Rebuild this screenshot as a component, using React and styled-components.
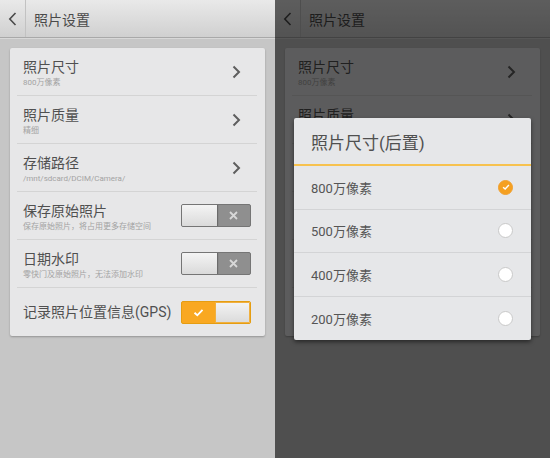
import React from "react";
import styled, { createGlobalStyle } from "styled-components";

const GlobalStyle = createGlobalStyle`
  html, body {
    margin: 0;
    padding: 0;
    background: #4f4f4f;
  }
  body {
    font-family: "Roboto", "Noto Sans CJK SC", sans-serif;
  }
`;

const Screens = styled.div`
  display: flex;
  width: 550px;
  height: 458px;
  overflow: hidden;
`;

const Phone = styled.div`
  position: relative;
  width: 275px;
  height: 458px;
  background: #c6c6c6;
  display: flex;
  flex-direction: column;
`;

const TopBar = styled.div`
  height: 37px;
  display: flex;
  align-items: center;
  background: linear-gradient(#e9e9e9, #d0d0d0);
  border-bottom: 1px solid #a9a9a9;
  box-shadow: 0 1px 0 #d8d8d8;
`;

const BackButton = styled.div`
  width: 26px;
  height: 37px;
  display: flex;
  align-items: center;
  justify-content: center;
  border-right: 1px solid #c2c2c2;
  box-sizing: border-box;
`;

const TopTitle = styled.div`
  margin-left: 8px;
  font-size: 14px;
  color: #4a4a4a;
`;

const Card = styled.div`
  margin: 10px 10px 0;
  background: #e7e7e8;
  border-radius: 2px;
  box-shadow: 0 1px 2px rgba(0, 0, 0, 0.25);
  padding: 0 8px 0 7px;
`;

const Row = styled.div`
  height: ${(p) => (p.$last ? "48px" : "47px")};
  display: flex;
  align-items: center;
  justify-content: space-between;
  padding: 0 6px 0 6px;
  border-bottom: ${(p) => (p.$last ? "none" : "1px solid #d4d4d4")};
`;

const Texts = styled.div`
  display: flex;
  flex-direction: column;
  padding-top: ${(p) => (p.$single ? "0" : "2px")};
`;

const RowTitle = styled.div`
  font-size: 14px;
  line-height: 18px;
  color: #505050;
`;

const RowSub = styled.div`
  font-size: 8px;
  line-height: 11px;
  color: #a3a3a3;
  margin-top: 1px;
`;

const LinkArrow = styled.div`
  display: flex;
  margin-right: 10px;
`;

const Switch = styled.div`
  width: 70px;
  height: 23px;
  box-sizing: border-box;
  display: flex;
  border: 1px solid ${(p) => (p.$on ? "#e59d12" : "#757575")};
  border-radius: 2px;
  overflow: hidden;
  background: ${(p) => (p.$on ? "#f9a821" : "#8f8f8f")};
  flex-direction: ${(p) => (p.$on ? "row-reverse" : "row")};
`;

const Knob = styled.div`
  width: 35px;
  height: 100%;
  background: linear-gradient(#f4f4f4, #dadada);
  box-shadow: ${(p) =>
    p.$on ? "inset 0 0 0 1px #f0b040" : "1px 0 1px rgba(0, 0, 0, 0.25)"};
`;

const SwitchMark = styled.div`
  flex: 1;
  display: flex;
  align-items: center;
  justify-content: center;
`;

const Overlay = styled.div`
  position: absolute;
  inset: 0;
  background: rgba(0, 0, 0, 0.6);
  display: flex;
  align-items: center;
  justify-content: center;
`;

const Dialog = styled.div`
  width: 237px;
  background: #e6e7e9;
  border-radius: 2px;
  box-shadow: 0 2px 4px rgba(0, 0, 0, 0.5);
  display: flex;
  flex-direction: column;
`;

const DialogTitle = styled.div`
  height: 46px;
  display: flex;
  align-items: center;
  padding-left: 17px;
  font-size: 17px;
  color: #505050;
  border-bottom: 2px solid #f7c24f;
`;

const Option = styled.div`
  height: 43.5px;
  display: flex;
  align-items: center;
  justify-content: space-between;
  padding: 0 18px 0 17px;
  font-size: 13px;
  color: #555;
  border-bottom: ${(p) => (p.$last ? "none" : "1px solid #d3d4d6")};
  box-sizing: border-box;
`;

const Radio = styled.div`
  width: 15px;
  height: 15px;
  border-radius: 50%;
  box-sizing: border-box;
  display: flex;
  align-items: center;
  justify-content: center;
  background: ${(p) => (p.$checked ? "#f5a020" : "#ffffff")};
  border: 1px solid ${(p) => (p.$checked ? "#f0a030" : "#c9c9c9")};
`;

const Chevron = ({ color = "#5e5e5e", left }) => (
  <svg width="9" height="14" viewBox="0 0 9 14">
    <path
      d={left ? "M7.5 1 L1.8 7 L7.5 13" : "M1.5 1.5 L7 7 L1.5 12.5"}
      fill="none"
      stroke={color}
      strokeWidth={left ? 1.6 : 2}
    />
  </svg>
);

const Cross = () => (
  <svg width="9" height="9" viewBox="0 0 9 9">
    <path d="M1 1 L8 8 M8 1 L1 8" stroke="#d8d8d8" strokeWidth="1.8" />
  </svg>
);

const Check = ({ size = 11, color = "#fff" }) => (
  <svg width={size} height={size} viewBox="0 0 11 11">
    <path
      d="M1.5 5.8 L4.3 8.3 L9.5 2.8"
      fill="none"
      stroke={color}
      strokeWidth="1.9"
    />
  </svg>
);

const rows = [
  { title: "照片尺寸", sub: "800万像素", kind: "link" },
  { title: "照片质量", sub: "精细", kind: "link" },
  { title: "存储路径", sub: "/mnt/sdcard/DCIM/Camera/", kind: "link" },
  { title: "保存原始照片", sub: "保存原始照片，将占用更多存储空间", kind: "off" },
  { title: "日期水印", sub: "零快门及原始照片，无法添加水印", kind: "off" },
  { title: "记录照片位置信息(GPS)", kind: "on" },
];

const options = ["800万像素", "500万像素", "400万像素", "200万像素"];

const Settings = () => (
  <>
    <TopBar>
      <BackButton>
        <Chevron left color="#4a4a4a" />
      </BackButton>
      <TopTitle>照片设置</TopTitle>
    </TopBar>
    <Card>
      {rows.map((r, i) => (
        <Row key={r.title} $last={i === rows.length - 1}>
          <Texts $single={!r.sub}>
            <RowTitle>{r.title}</RowTitle>
            {r.sub && <RowSub>{r.sub}</RowSub>}
          </Texts>
          {r.kind === "link" && (
            <LinkArrow>
              <Chevron />
            </LinkArrow>
          )}
          {r.kind !== "link" && (
            <Switch $on={r.kind === "on"}>
              <Knob $on={r.kind === "on"} />
              <SwitchMark>{r.kind === "on" ? <Check /> : <Cross />}</SwitchMark>
            </Switch>
          )}
        </Row>
      ))}
    </Card>
  </>
);

const App = () => (
  <>
    <GlobalStyle />
    <Screens>
      <Phone>
        <Settings />
      </Phone>
      <Phone>
        <Settings />
        <Overlay>
          <Dialog>
            <DialogTitle>照片尺寸(后置)</DialogTitle>
            {options.map((o, i) => (
              <Option key={o} $last={i === options.length - 1}>
                {o}
                <Radio $checked={i === 0}>{i === 0 && <Check size={8} />}</Radio>
              </Option>
            ))}
          </Dialog>
        </Overlay>
      </Phone>
    </Screens>
  </>
);

export default App;
